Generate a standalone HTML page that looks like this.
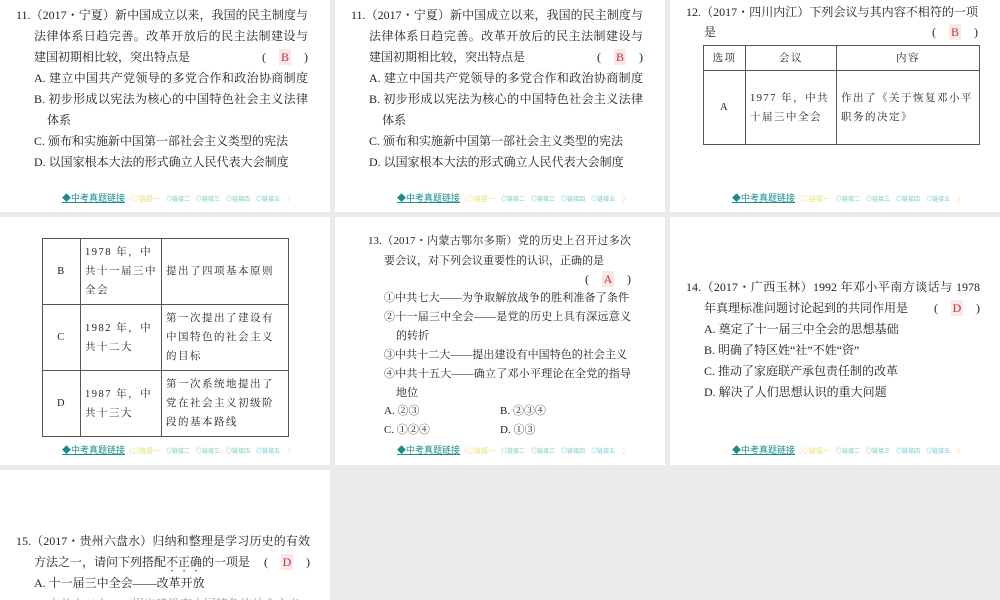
<!DOCTYPE html>
<html><head><meta charset="utf-8"><style>
*{margin:0;padding:0;box-sizing:border-box}
body{width:1000px;height:600px;overflow:hidden;background:#ebebeb;position:relative;font-family:"Liberation Serif","Noto Serif CJK SC",serif;color:#222}
.p{position:absolute;background:#fff;overflow:hidden}
.l{position:absolute;font-size:12px;line-height:16px;white-space:nowrap}
.j{text-align:justify;text-align-last:justify;white-space:normal;height:16px;overflow:hidden}
.s{font-size:11px}
.ans{position:absolute;font-size:12px;line-height:16px;width:46px;display:flex;justify-content:space-between}
.ans b{font-weight:normal;color:#c0333a;background:#fbe6e8;padding:0 2px}
.em{text-emphasis:dot;-webkit-text-emphasis:dot;text-emphasis-position:under;-webkit-text-emphasis-position:under}
.ft{position:absolute;font-family:"Liberation Sans","Noto Sans CJK SC",sans-serif;font-size:9px;line-height:12px;white-space:nowrap}
.ft .t{color:#1a8c8c;text-decoration:underline}
.ft .k{color:#7cc7c7;font-size:6px;margin-left:6px}
.ft .y{color:#e8e07a;font-size:7px}
table{position:absolute;border-collapse:collapse;font-size:10.5px;letter-spacing:1.5px}
td{border:1px solid #555;text-align:center;vertical-align:middle;line-height:19px;padding:0 4px}
td.c{text-align:left}
</style></head><body>

<!-- Panel 1 -->
<div class="p" style="left:0;top:0;width:330px;height:212px">
<div class="l j" style="left:16px;top:7px;width:292px">11.（2017・宁夏）新中国成立以来，我国的民主制度与</div>
<div class="l j" style="left:34px;top:28px;width:274px">法律体系日趋完善。改革开放后的民主法制建设与</div>
<div class="l" style="left:34px;top:49px">建国初期相比较，突出特点是</div>
<div class="ans" style="left:262px;top:49px"><span>(</span><b>B</b><span>)</span></div>
<div class="l j" style="left:34px;top:70px;width:274px">A. 建立中国共产党领导的多党合作和政治协商制度</div>
<div class="l j" style="left:34px;top:91px;width:274px">B. 初步形成以宪法为核心的中国特色社会主义法律</div>
<div class="l" style="left:47px;top:112px">体系</div>
<div class="l" style="left:34px;top:133px">C. 颁布和实施新中国第一部社会主义类型的宪法</div>
<div class="l" style="left:34px;top:154px">D. 以国家根本大法的形式确立人民代表大会制度</div>
<div class="ft" style="left:62px;top:192px"><span class="t">◆中考真题链接</span><span class="y">〈◎链接一</span><span class="k">◎链接二</span><span class="k">◎链接三</span><span class="k">◎链接四</span><span class="k">◎链接五</span><span class="y">　〉</span></div>
</div>

<!-- Panel 2 -->
<div class="p" style="left:335px;top:0;width:330px;height:212px">
<div class="l j" style="left:16px;top:7px;width:292px">11.（2017・宁夏）新中国成立以来，我国的民主制度与</div>
<div class="l j" style="left:34px;top:28px;width:274px">法律体系日趋完善。改革开放后的民主法制建设与</div>
<div class="l" style="left:34px;top:49px">建国初期相比较，突出特点是</div>
<div class="ans" style="left:262px;top:49px"><span>(</span><b>B</b><span>)</span></div>
<div class="l j" style="left:34px;top:70px;width:274px">A. 建立中国共产党领导的多党合作和政治协商制度</div>
<div class="l j" style="left:34px;top:91px;width:274px">B. 初步形成以宪法为核心的中国特色社会主义法律</div>
<div class="l" style="left:47px;top:112px">体系</div>
<div class="l" style="left:34px;top:133px">C. 颁布和实施新中国第一部社会主义类型的宪法</div>
<div class="l" style="left:34px;top:154px">D. 以国家根本大法的形式确立人民代表大会制度</div>
<div class="ft" style="left:62px;top:192px"><span class="t">◆中考真题链接</span><span class="y">〈◎链接一</span><span class="k">◎链接二</span><span class="k">◎链接三</span><span class="k">◎链接四</span><span class="k">◎链接五</span><span class="y">　〉</span></div>
</div>

<!-- Panel 3 -->
<div class="p" style="left:670px;top:0;width:330px;height:212px">
<div class="l j" style="left:16px;top:4px;width:292px">12.（2017・四川内江）下列会议与其内容<span class="em">不相符</span>的一项</div>
<div class="l" style="left:34px;top:24px">是</div>
<div class="ans" style="left:262px;top:24px"><span>(</span><b>B</b><span>)</span></div>
<table style="left:33px;top:45px;width:277px">
<tr style="height:25px"><td style="width:42px">选项</td><td style="width:91px">会议</td><td>内容</td></tr>
<tr style="height:74px"><td>A</td><td class="c">1977 年，中共十届三中全会</td><td class="c">作出了《关于恢复邓小平职务的决定》</td></tr>
</table>
<div class="ft" style="left:62px;top:192px"><span class="t">◆中考真题链接</span><span class="y">〈◎链接一</span><span class="k">◎链接二</span><span class="k">◎链接三</span><span class="k">◎链接四</span><span class="k">◎链接五</span><span class="y">　〉</span></div>
</div>

<!-- Panel 4 -->
<div class="p" style="left:0;top:217px;width:330px;height:248px">
<table style="left:42px;top:21px;width:247px">
<tr style="height:66px"><td style="width:38px">B</td><td class="c" style="width:81px">1978 年，中共十一届三中全会</td><td class="c">提出了四项基本原则</td></tr>
<tr style="height:66px"><td>C</td><td class="c">1982 年，中共十二大</td><td class="c">第一次提出了建设有中国特色的社会主义的目标</td></tr>
<tr style="height:66px"><td>D</td><td class="c">1987 年，中共十三大</td><td class="c">第一次系统地提出了党在社会主义初级阶段的基本路线</td></tr>
</table>
<div class="ft" style="left:62px;top:227px"><span class="t">◆中考真题链接</span><span class="y">〈◎链接一</span><span class="k">◎链接二</span><span class="k">◎链接三</span><span class="k">◎链接四</span><span class="k">◎链接五</span><span class="y">　〉</span></div>
</div>

<!-- Panel 5 -->
<div class="p" style="left:335px;top:217px;width:330px;height:248px">
<div class="l j s" style="left:33px;top:16px;width:263px">13.（2017・内蒙古鄂尔多斯）党的历史上召开过多次重</div>
<div class="l s" style="left:49px;top:36px">要会议，对下列会议重要性的认识，正确的是</div>
<div class="ans" style="left:250px;top:54px"><span>(</span><b>A</b><span>)</span></div>
<div class="l j s" style="left:49px;top:73px;width:245px">①中共七大——为争取解放战争的胜利准备了条件</div>
<div class="l j s" style="left:49px;top:92px;width:247px">②十一届三中全会——是党的历史上具有深远意义</div>
<div class="l s" style="left:61px;top:111px">的转折</div>
<div class="l j s" style="left:49px;top:130px;width:243px">③中共十二大——提出建设有中国特色的社会主义</div>
<div class="l j s" style="left:49px;top:149px;width:247px">④中共十五大——确立了邓小平理论在全党的指导</div>
<div class="l s" style="left:61px;top:168px">地位</div>
<div class="l s" style="left:49px;top:186px">A. ②③</div>
<div class="l s" style="left:165px;top:186px">B. ②③④</div>
<div class="l s" style="left:49px;top:205px">C. ①②④</div>
<div class="l s" style="left:165px;top:205px">D. ①③</div>
<div class="ft" style="left:62px;top:227px"><span class="t">◆中考真题链接</span><span class="y">〈◎链接一</span><span class="k">◎链接二</span><span class="k">◎链接三</span><span class="k">◎链接四</span><span class="k">◎链接五</span><span class="y">　〉</span></div>
</div>

<!-- Panel 6 -->
<div class="p" style="left:670px;top:217px;width:330px;height:248px">
<div class="l j" style="left:16px;top:62px;width:294px">14.（2017・广西玉林）1992 年邓小平南方谈话与 1978</div>
<div class="l" style="left:34px;top:83px">年真理标准问题讨论起到的共同作用是</div>
<div class="ans" style="left:264px;top:83px"><span>(</span><b>D</b><span>)</span></div>
<div class="l" style="left:34px;top:104px">A. 奠定了十一届三中全会的思想基础</div>
<div class="l" style="left:34px;top:125px">B. 明确了特区姓“社”不姓“资”</div>
<div class="l" style="left:34px;top:146px">C. 推动了家庭联产承包责任制的改革</div>
<div class="l" style="left:34px;top:167px">D. 解决了人们思想认识的重大问题</div>
<div class="ft" style="left:62px;top:227px"><span class="t">◆中考真题链接</span><span class="y">〈◎链接一</span><span class="k">◎链接二</span><span class="k">◎链接三</span><span class="k">◎链接四</span><span class="k">◎链接五</span><span class="y">　〉</span></div>
</div>

<!-- Panel 7 -->
<div class="p" style="left:0;top:470px;width:330px;height:130px">
<div class="l j" style="left:16px;top:63px;width:294px">15.（2017・贵州六盘水）归纳和整理是学习历史的有效</div>
<div class="l" style="left:34px;top:84px">方法之一，请问下列搭配<span class="em">不正确</span>的一项是</div>
<div class="ans" style="left:264px;top:84px"><span>(</span><b>D</b><span>)</span></div>
<div class="l" style="left:34px;top:105px">A. 十一届三中全会——改革开放</div>
<div class="l" style="left:34px;top:126px;color:#999">B. 中共十二大——提出建设有中国特色的社会主义</div>
</div>

</body></html>
